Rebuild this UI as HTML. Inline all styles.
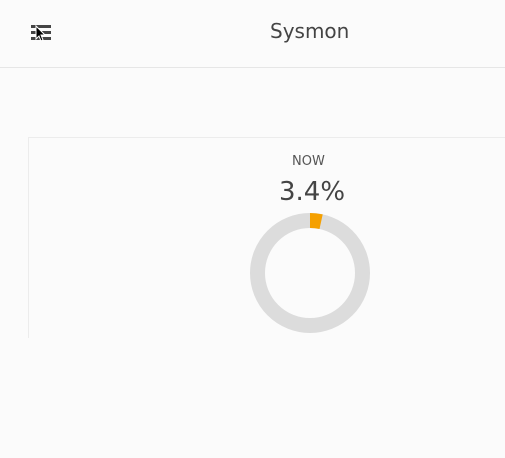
<!DOCTYPE html><html><head><style>
body{margin:0;width:505px;height:458px;background:#fbfbfb;font-family:"DejaVu Sans","Liberation Sans",sans-serif;overflow:hidden;position:relative}
.hdr{position:absolute;left:0;top:0;width:505px;height:67px;border-bottom:1px solid #e6e6e6;background:#fbfbfb}
.title{position:absolute;left:270px;top:19px;font-size:20px;color:#444}
.card{position:absolute;left:28px;top:137px;width:480px;height:200px;border-top:1px solid #ececec;border-left:1px solid #ececec}
.now{position:absolute;left:292px;top:154px;font-size:13px;color:#555}
.val{position:absolute;left:279px;top:177px;font-size:26px;color:#444}
</style></head><body>
<div class="hdr"><svg style="position:absolute;left:31px;top:24px" width="20" height="18"><rect x="0" y="1" width="20" height="3" fill="#444"/><rect x="0" y="7" width="20" height="3" fill="#444"/><rect x="0" y="13" width="20" height="3" fill="#444"/><path d="M5 2 L5 15 L8 12 L10 17 L12 16 L10 11 L14 11 Z" fill="#000" stroke="#fff" stroke-width="1"/></svg>
<div class="title">Sysmon</div></div>
<div class="card"></div>
<div class="now">NOW</div>
<div class="val">3.4%</div>
<svg style="position:absolute;left:250px;top:213px" width="120" height="120"><circle cx="60" cy="60" r="52.5" fill="none" stroke="#dcdcdc" stroke-width="15"/><circle cx="60" cy="60" r="52.5" fill="none" stroke="#f5a000" stroke-width="15" stroke-dasharray="11.2 400" transform="rotate(-90 60 60)"/></svg>
</body></html>
